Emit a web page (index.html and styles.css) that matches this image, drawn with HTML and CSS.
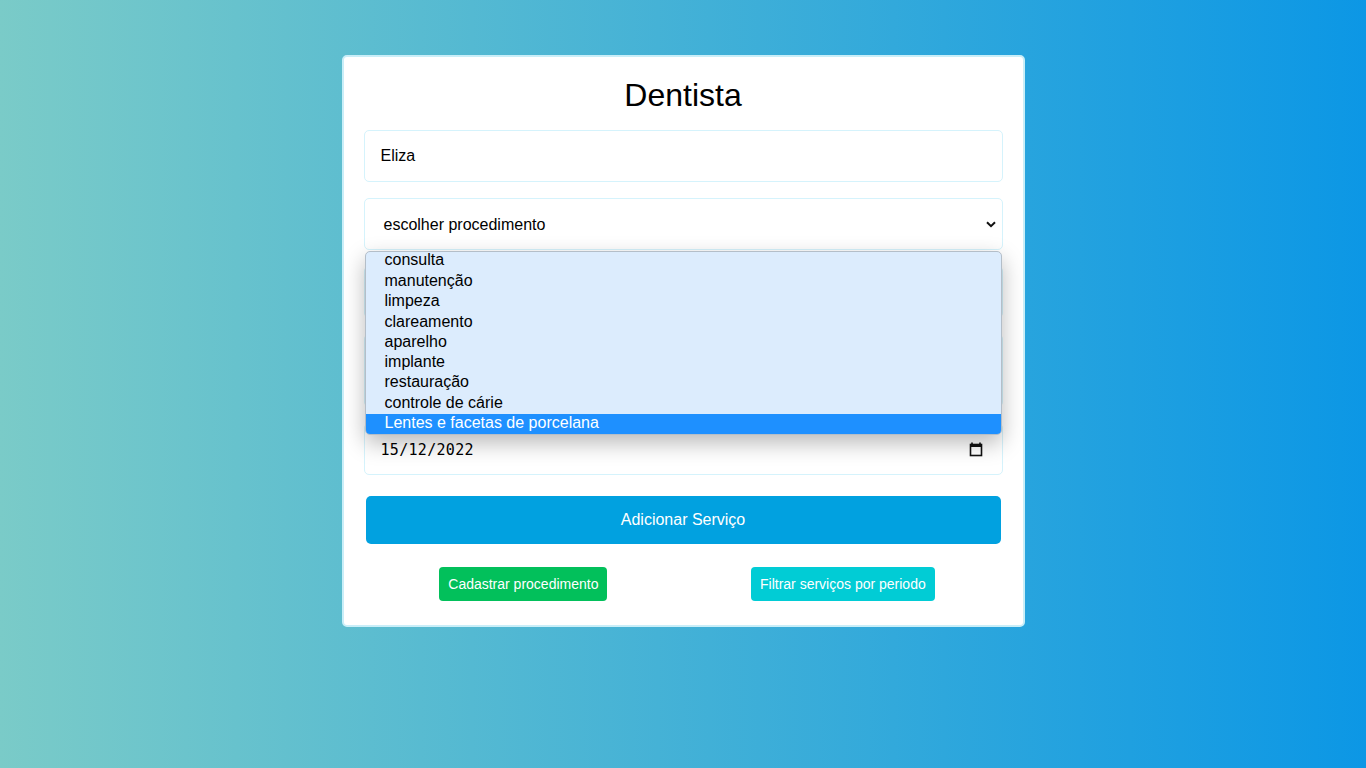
FILE: index.html
```html
<!DOCTYPE html>
<html lang="pt-BR">
<head>
<meta charset="utf-8">
<title>Dentista</title>
<link rel="stylesheet" href="styles.css">
</head>
<body>
<main class="page">
  <section class="card">
    <h1 class="title">Dentista</h1>
    <form class="form">
      <div class="field">Eliza</div>
      <div class="select-wrap">
        <div class="field select">
          <span>escolher procedimento</span>
          <svg class="chevron" width="10" height="7" viewBox="0 0 10 7"><path d="M1 1.2 L5 5.2 L9 1.2" fill="none" stroke="#111" stroke-width="2"/></svg>
        </div>
        <ul class="options">
          <li class="option">consulta</li>
          <li class="option">manutenção</li>
          <li class="option">limpeza</li>
          <li class="option">clareamento</li>
          <li class="option">aparelho</li>
          <li class="option">implante</li>
          <li class="option">restauração</li>
          <li class="option">controle de cárie</li>
          <li class="option selected">Lentes e facetas de porcelana</li>
        </ul>
      </div>
      <div class="field"></div>
      <div class="field tall"></div>
      <div class="field date">
        <span class="date-text">15/12/2022</span>
        <svg class="cal" width="14" height="15" viewBox="0 0 14 15"><path d="M3 0.5 V3 M11 0.5 V3" stroke="#111" stroke-width="1.6"/><rect x="1.5" y="2.5" width="11" height="11" fill="none" stroke="#111" stroke-width="1.6"/><rect x="1.5" y="2.5" width="11" height="2.5" fill="#111"/></svg>
      </div>
      <button type="button" class="btn-main">Adicionar Serviço</button>
    </form>
    <div class="actions">
      <button type="button" class="btn-small green">Cadastrar procedimento</button>
      <button type="button" class="btn-small cyan">Filtrar serviços por periodo</button>
    </div>
  </section>
</main>
</body>
</html>
```
FILE: styles.css
```css
* { box-sizing: border-box; }
html, body {
  margin: 0;
  height: 100%;
}
body {
  font-family: "Liberation Sans", Arial, sans-serif;
  background: linear-gradient(to right, #7acbc8 0%, #0c97e5 100%);
  color: #000;
}
.page {
  display: flex;
  justify-content: center;
  padding-top: 55px;
}
.card {
  width: 683px;
  background: #fff;
  border: 2px solid #c9eef8;
  border-radius: 5px;
  padding: 20px 20px 24px;
}
.title {
  margin: 0 0 16px;
  font-size: 32px;
  font-weight: normal;
  line-height: 37px;
  text-align: center;
}
.form {
  display: flex;
  flex-direction: column;
  gap: 16px;
}
.field {
  height: 52px;
  border: 1px solid #d5f3fc;
  border-radius: 5px;
  padding: 0 16px;
  display: flex;
  align-items: center;
  font-size: 16px;
  background: #fff;
}
.field.tall { height: 73px; }
.select-wrap { position: relative; }
.select {
  padding-left: 19px;
  padding-right: 6px;
  padding-top: 2px;
  justify-content: space-between;
}
.chevron { margin-top: -1px; }
.options {
  position: absolute;
  left: 1px;
  right: 1px;
  top: 53px;
  margin: 0;
  padding: 0;
  list-style: none;
  background: #dcecfd;
  border: 1px solid #b4bec8;
  border-radius: 5px;
  overflow: hidden;
  box-shadow: 0 8px 22px rgba(0, 0, 0, 0.28);
  z-index: 5;
}
.option {
  height: 20.3px;
  line-height: 18px;
  padding-left: 19px;
  font-size: 16px;
  color: #000;
}
.option:first-child {
  height: 20px;
  line-height: 15px;
}
.option.selected {
  background: #1e90ff;
  color: #fff;
  height: 20px;
  line-height: 18px;
}
.date {
  justify-content: space-between;
  padding-right: 19px;
  padding-top: 2px;
}
.date-text {
  font-family: "DejaVu Sans Mono", "Liberation Mono", monospace;
  font-size: 15px;
  letter-spacing: 0.3px;
}
.cal { margin-top: -2px; }
.btn-main {
  margin: 5px 2px 0;
  height: 48px;
  border: none;
  border-radius: 5px;
  background: #01a1e0;
  color: #fff;
  font-family: "Liberation Sans", Arial, sans-serif;
  font-size: 16px;
}
.actions {
  display: flex;
  justify-content: space-around;
  margin: 23px -4px 0 4px;
}
.btn-small {
  height: 34px;
  border: none;
  border-radius: 4px;
  padding: 0 9px;
  color: #fff;
  font-family: "Liberation Sans", Arial, sans-serif;
  font-size: 14px;
}
.green { background: #02c05b; }
.cyan { background: #01ccd5; }
```
